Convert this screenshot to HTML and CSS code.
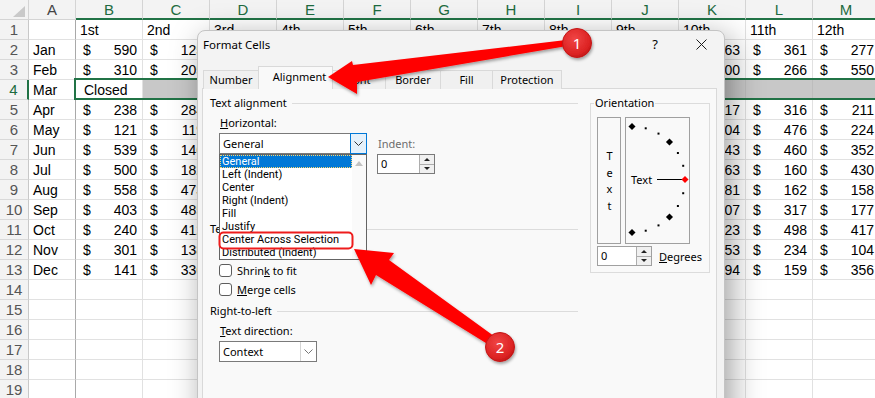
FILE: index.html
```html
<!DOCTYPE html>
<html lang="en">
<head>
    <meta charset="UTF-8">
    <meta name="viewport" content="width=device-width, initial-scale=1.0">
    <title>Format Cells - Alignment</title>
    <link rel="stylesheet" href="styles.css">
</head>
<body>
    <div class="sheet" id="sheet"></div>
    <div class="selection"></div>

    <div class="dialog">
        <div class="titlebar">
            <span class="title">Format Cells</span>
            <span class="tb-btn">?</span>
            <span class="tb-btn">
                <svg width="11" height="11" viewBox="0 0 11 11"><path d="M0.5 0.5L10.5 10.5M10.5 0.5L0.5 10.5" stroke="#1b1b1b" stroke-width="1"/></svg>
            </span>
        </div>

        <div class="tabs">
            <div class="tab tab-number">Number</div>
            <div class="tab tab-align active">Alignment</div>
            <div class="tab tab-font">Font</div>
            <div class="tab tab-border">Border</div>
            <div class="tab tab-fill">Fill</div>
            <div class="tab tab-protect">Protection</div>
        </div>

        <div class="panel">
            <div class="panel-left">
                <div class="group-head"><span>Text alignment</span></div>

                <div class="align-row">
                    <div class="field">
                        <div class="label"><u>H</u>orizontal:</div>
                        <div class="combo combo-h">
                            <span class="combo-text">General</span>
                            <span class="combo-btn open">
                                <svg width="9" height="5" viewBox="0 0 9 5"><path d="M0.5 0.5L4.5 4.5L8.5 0.5" fill="none" stroke="#333" stroke-width="1"/></svg>
                            </span>
                            <div class="droplist">
                                <div class="options">
                                    <div class="opt selected">General</div>
                                    <div class="opt">Left (Indent)</div>
                                    <div class="opt">Center</div>
                                    <div class="opt">Right (Indent)</div>
                                    <div class="opt">Fill</div>
                                    <div class="opt">Justify</div>
                                    <div class="opt">Center Across Selection</div>
                                    <div class="opt">Distributed (Indent)</div>
                                </div>
                                <div class="scrollbar"><span class="scroll-up"></span></div>
                            </div>
                        </div>
                    </div>
                    <div class="field indent">
                        <div class="label muted">Indent:</div>
                        <div class="spin spin-indent">
                            <span class="spin-val">0</span>
                            <span class="spin-btns"><span class="arrow-up"></span><span class="arrow-down"></span></span>
                        </div>
                    </div>
                </div>

                <!-- Vertical combo and Wrap text sit under the open list -->
                <div class="group-head head-control"><span>Te</span></div>
                <div class="check check-first"><span class="box"></span><span>Shrin<u>k</u> to fit</span></div>
                <div class="check"><span class="box"></span><span><u>M</u>erge cells</span></div>

                <div class="group-head head-rtl"><span>Right-to-left</span></div>
                <div class="label label-dir"><u>T</u>ext direction:</div>
                <div class="combo combo-dir">
                    <span class="combo-text">Context</span>
                    <span class="combo-btn plain">
                        <svg width="9" height="5" viewBox="0 0 9 5"><path d="M0.5 0.5L4.5 4.5L8.5 0.5" fill="none" stroke="#777" stroke-width="1"/></svg>
                    </span>
                </div>
            </div>

            <div class="orient">
                <div class="orient-title">Orientation</div>
                <div class="orient-boxes">
                    <div class="vtext"><span>Text</span></div>
                    <div class="dial">
                        <svg width="63" height="125" viewBox="0 0 63 125" id="dial">
                            <line x1="31" y1="61.5" x2="56" y2="61.5" stroke="#000" stroke-width="1"/>
                            <text x="5" y="65.5" class="dial-text">Text</text>
                        </svg>
                    </div>
                </div>
                <div class="deg-row">
                    <div class="spin spin-deg">
                        <span class="spin-val">0</span>
                        <span class="spin-btns"><span class="arrow-up"></span><span class="arrow-down"></span></span>
                    </div>
                    <span class="deg-label"><u>D</u>egrees</span>
                </div>
            </div>
        </div>
    </div>

    <svg class="marks" width="875" height="398" viewBox="0 0 875 398">
        <defs>
            <radialGradient id="badge" cx="42%" cy="36%" r="70%">
                <stop offset="0" stop-color="#f04545"/>
                <stop offset="0.75" stop-color="#dc2222"/>
                <stop offset="1" stop-color="#b91515"/>
            </radialGradient>
            <filter id="shade" x="-30%" y="-30%" width="160%" height="160%">
                <feDropShadow dx="1" dy="2" stdDeviation="1.6" flood-color="#000" flood-opacity="0.35"/>
            </filter>
        </defs>
        <rect x="219.5" y="232.5" width="133" height="16" rx="4" fill="none" stroke="#ee1c1c" stroke-width="2"/>
        <polygon points="328,77 352,61 353,65 566,40 567,46 357,82 357,94" fill="#ff0000" filter="url(#shade)"/>
        <polygon points="354,249 394,253 389,260 498,339 494,348 376,275 371,285" fill="#ff0000" filter="url(#shade)"/>
        <circle cx="577" cy="43" r="14.5" fill="url(#badge)" stroke="#c41818" stroke-width="1" filter="url(#shade)"/>
        <text x="577" y="48.5" class="badge-num">1</text>
        <circle cx="500" cy="347" r="14.5" fill="url(#badge)" stroke="#c41818" stroke-width="1" filter="url(#shade)"/>
        <text x="500" y="352.5" class="badge-num">2</text>
    </svg>

    <script>
        const letters = ['A','B','C','D','E','F','G','H','I','J','K','L','M'];
        const heads = ['1st','2nd','3rd','4th','5th','6th','7th','8th','9th','10th','11th','12th'];
        // columns D..J are behind the dialog, so only B, C, K, L, M carry values
        const rows = [
            ['Jan', [590, 125, 263, 361, 277]],
            ['Feb', [310, 205, 400, 266, 550]],
            ['Mar', null],
            ['Apr', [238, 284, 117, 316, 211]],
            ['May', [121, 119, 304, 476, 224]],
            ['Jun', [539, 146, 443, 460, 352]],
            ['Jul', [500, 182, 363, 160, 430]],
            ['Aug', [558, 473, 281, 162, 158]],
            ['Sep', [403, 485, 507, 317, 177]],
            ['Oct', [240, 412, 123, 498, 417]],
            ['Nov', [301, 138, 553, 234, 104]],
            ['Dec', [141, 336, 194, 159, 356]]
        ];

        const sheet = document.getElementById('sheet');

        function addCell(cls, html) {
            const el = document.createElement('div');
            el.className = cls;
            if (html !== undefined) el.innerHTML = html;
            sheet.appendChild(el);
        }

        function money(v) {
            return '<span>$</span><span>' + v + '</span>';
        }

        addCell('corner', '<span class="select-all"></span>');
        letters.forEach((l, i) => addCell('ch' + (i > 0 ? ' sel' : ''), l));

        for (let r = 1; r <= 19; r++) {
            addCell('rh' + (r === 4 ? ' sel' : ''), r);
            if (r === 1) {
                addCell('c col-a');
                heads.forEach(h => addCell('c', h));
            } else if (r >= 2 && r <= 13) {
                const [month, vals] = rows[r - 2];
                addCell('c col-a', month);
                if (vals) {
                    addCell('c acct', money(vals[0]));
                    addCell('c acct', money(vals[1]));
                    for (let i = 0; i < 7; i++) addCell('c');
                    addCell('c num', vals[2]);
                    addCell('c acct', money(vals[3]));
                    addCell('c acct', money(vals[4]));
                } else {
                    addCell('c active', 'Closed');
                    for (let i = 0; i < 11; i++) addCell('c band');
                }
            } else {
                addCell('c col-a');
                for (let i = 0; i < 12; i++) addCell('c');
            }
        }

        // orientation dial: 13 marks on a half circle
        const dial = document.getElementById('dial');
        const ns = 'http://www.w3.org/2000/svg';
        for (let k = 0; k <= 12; k++) {
            const a = (-90 + k * 15) * Math.PI / 180;
            const x = 6 + 53 * Math.cos(a);
            const y = 61.5 + 53 * Math.sin(a);
            const big = k % 3 === 0;
            const m = document.createElementNS(ns, 'rect');
            const s = big ? 5 : 2;
            m.setAttribute('x', x - s / 2);
            m.setAttribute('y', y - s / 2);
            m.setAttribute('width', s);
            m.setAttribute('height', s);
            m.setAttribute('fill', k === 6 ? '#ff0000' : '#000');
            if (big) m.setAttribute('transform', 'rotate(45 ' + x + ' ' + y + ')');
            dial.appendChild(m);
        }
    </script>
</body>
</html>
```

FILE: styles.css
```css
* {
    box-sizing: border-box;
    margin: 0;
    padding: 0;
}

body {
    width: 875px;
    height: 398px;
    overflow: hidden;
    position: relative;
    background: #fff;
    font-family: 'Liberation Sans', Arial, sans-serif;
}

/* ---------- worksheet ---------- */

.sheet {
    display: grid;
    grid-template-columns: 29px 47px repeat(12, 67px);
    grid-auto-rows: 20px;
    font-size: 14px;
    color: #000;
}

.sheet > div {
    border-right: 1px solid #e1e1e1;
    border-bottom: 1px solid #e1e1e1;
    line-height: 19px;
    white-space: nowrap;
    overflow: hidden;
}

.corner {
    background: #f3f3f3;
    position: relative;
    border-color: #d4d4d4 !important;
}

.select-all {
    position: absolute;
    right: 3px;
    bottom: 2px;
    width: 0;
    height: 0;
    border-left: 12px solid transparent;
    border-bottom: 11px solid #c9c9c9;
}

.ch {
    background: #f3f3f3;
    color: #444;
    text-align: center;
    font-size: 15px;
    border-bottom-color: #d4d4d4 !important;
    border-right-color: #d4d4d4 !important;
}

.ch.sel {
    color: #1d6b40;
    border-bottom: 2px solid #217346 !important;
}

.rh {
    background: #f3f3f3;
    color: #555;
    text-align: center;
    font-size: 15px;
    border-right-color: #c8c8c8 !important;
    border-bottom-color: #d9d9d9 !important;
}

.rh.sel {
    color: #1d6b40;
    border-right: 2px solid #217346 !important;
}

.c {
    padding: 1px 5px 0 4px;
}

.col-a {
    border-right-color: #a9a9a9 !important;
}

.acct {
    display: flex;
    justify-content: space-between;
    padding: 1px 5px 0 7px;
}

.num {
    text-align: right;
}

.active {
    padding-left: 8px;
}

.band {
    background: #c8c8c8;
    border-right-color: #bdbdbd !important;
}

.selection {
    position: absolute;
    left: 74px;
    top: 78px;
    width: 820px;
    height: 22px;
    border: 2px solid #217346;
}

/* ---------- dialog ---------- */

.dialog {
    position: absolute;
    left: 197px;
    top: 30px;
    width: 528px;
    height: 400px;
    background: #f3f3f3;
    border: 1px solid #c4c4c4;
    border-radius: 8px 8px 0 0;
    box-shadow: 6px 8px 32px rgba(0, 0, 0, 0.38);
    padding: 0 7px 0 4px;
    font-family: 'Noto Sans', 'Segoe UI', sans-serif;
    font-size: 11px;
    color: #000;
}

.titlebar {
    display: flex;
    align-items: center;
    height: 26px;
    margin: 0 -7px 0 -4px;
    padding-left: 5px;
}

.title {
    flex: 1;
    font-size: 11.5px;
}

.tb-btn {
    width: 46px;
    text-align: center;
    font-size: 13px;
    display: flex;
    justify-content: center;
    align-items: center;
}

.tabs {
    display: flex;
    align-items: flex-end;
    height: 23px;
    margin: 9px 0 0 1px;
}

.tab {
    height: 19px;
    margin-right: -1px;
    border: 1px solid #d9d9d9;
    border-bottom: none;
    background: #f0f0f0;
    text-align: center;
    line-height: 17px;
}

.tab.active {
    position: relative;
    z-index: 1;
    height: 23px;
    line-height: 20px;
    background: #f9f9f9;
}

.tab-number { width: 56px; }
.tab-align { width: 75px; }
.tab-font { width: 54px; }
.tab-border { width: 56px; }
.tab-fill { width: 53px; }
.tab-protect { width: 70px; }

.panel {
    display: flex;
    gap: 12px;
    margin-top: -1px;
    height: 330px;
    background: #f9f9f9;
    border: 1px solid #d9d9d9;
    padding: 0 6px 0 7px;
}

.panel-left {
    width: 368px;
}

.group-head {
    display: flex;
    align-items: center;
    gap: 5px;
    height: 14px;
    line-height: 14px;
    margin-top: 7px;
}

.group-head::after {
    content: "";
    flex: 1;
    height: 1px;
    background: #dcdcdc;
}

.head-control {
    margin-top: 48px;
}

.head-rtl {
    margin-top: 8px;
}

.label {
    height: 14px;
    line-height: 14px;
    margin-left: 10px;
}

.label.muted {
    color: #6d6d6d;
    margin-left: 0;
}

.align-row {
    display: flex;
    gap: 10px;
    margin-top: 6px;
    margin-left: 9px;
}

.align-row .label {
    margin-left: 1px;
}

.field.indent {
    padding-top: 21px;
}

.combo {
    position: relative;
    display: flex;
    height: 21px;
    background: #fff;
    border: 1px solid #7a7a7a;
    margin-top: 3px;
}

.combo-h {
    width: 148px;
}

.combo-text {
    flex: 1;
    padding-left: 3px;
    line-height: 19px;
}

.combo-btn {
    width: 17px;
    display: flex;
    align-items: center;
    justify-content: center;
}

.combo-btn.open {
    margin: -1px -1px -1px 0;
    border: 1px solid #0078d7;
    background: #e5f1fb;
}

.combo-btn.plain {
    width: 16px;
    border-left: 1px solid #d4d4d4;
}

.droplist {
    position: absolute;
    z-index: 5;
    left: -1px;
    top: 20px;
    width: 148px;
    height: 106px;
    display: flex;
    background: #fff;
    border: 1px solid #646464;
}

.options {
    width: 132px;
    font-family: Roboto, 'Noto Sans', sans-serif;
}

.opt {
    height: 13px;
    line-height: 13px;
    padding-left: 2px;
    white-space: nowrap;
}

.opt.selected {
    background: #0078d7;
    color: #fff;
    outline: 1px dotted #f7d774;
    outline-offset: -1px;
}

.scrollbar {
    flex: 1;
    background: #fafafa;
    display: flex;
    justify-content: center;
    padding-top: 6px;
}

.scroll-up {
    width: 0;
    height: 0;
    border-left: 4px solid transparent;
    border-right: 4px solid transparent;
    border-bottom: 5px solid #c2c2c2;
}

.spin {
    display: flex;
    height: 20px;
    background: #fff;
    border: 1px solid #7a7a7a;
}

.spin-indent {
    width: 58px;
    margin-top: 3px;
}

.spin-val {
    flex: 1;
    padding-left: 3px;
    line-height: 18px;
}

.spin-btns {
    width: 15px;
    display: flex;
    flex-direction: column;
    border-left: 1px solid #adadad;
    background: #f0f0f0;
}

.spin-btns span {
    flex: 1;
    display: flex;
    justify-content: center;
    align-items: center;
}

.spin-btns .arrow-up {
    border-bottom: 1px solid #adadad;
}

.arrow-up::before,
.arrow-down::before {
    content: "";
    width: 0;
    height: 0;
    border-left: 3px solid transparent;
    border-right: 3px solid transparent;
}

.arrow-up::before {
    border-bottom: 3px solid #222;
}

.arrow-down::before {
    border-top: 3px solid #222;
}

.check {
    display: flex;
    align-items: center;
    gap: 5px;
    height: 14px;
    margin: 5px 0 0 9px;
}

.check-first {
    margin-top: 27px;
}

.box {
    width: 13px;
    height: 13px;
    background: #fff;
    border: 1px solid #5d5d5d;
    border-radius: 3px;
}

.label-dir {
    margin-top: 6px;
}

.combo-dir {
    width: 98px;
    margin-left: 9px;
}

/* orientation group */

.orient {
    width: 120px;
    height: 170px;
    margin-top: 14px;
    border: 1px solid #dcdcdc;
    padding: 0 6px;
}

.orient-title {
    width: fit-content;
    height: 14px;
    line-height: 14px;
    margin: -8px 0 0 -3px;
    padding: 0 1px;
    background: #f9f9f9;
}

.orient-boxes {
    display: flex;
    gap: 4px;
    margin-top: 7px;
}

.vtext {
    width: 24px;
    height: 127px;
    border: 1px solid #a0a0a0;
    display: flex;
    justify-content: center;
    align-items: center;
}

.vtext span {
    writing-mode: vertical-rl;
    text-orientation: upright;
    letter-spacing: 1.5px;
    line-height: 14px;
}

.dial {
    width: 65px;
    height: 127px;
    border: 1px solid #a0a0a0;
}

.dial svg {
    display: block;
}

.dial-text {
    font-family: 'Noto Sans', sans-serif;
    font-size: 11px;
}

.deg-row {
    display: flex;
    align-items: center;
    gap: 7px;
    margin-top: 2px;
}

.spin-deg {
    width: 55px;
    border-color: #a0a0a0;
}

/* ---------- callouts ---------- */

.marks {
    position: absolute;
    left: 0;
    top: 0;
    z-index: 10;
    pointer-events: none;
}

.badge-num {
    font-family: 'Noto Sans', sans-serif;
    font-size: 15px;
    fill: #fff;
    text-anchor: middle;
}
```
